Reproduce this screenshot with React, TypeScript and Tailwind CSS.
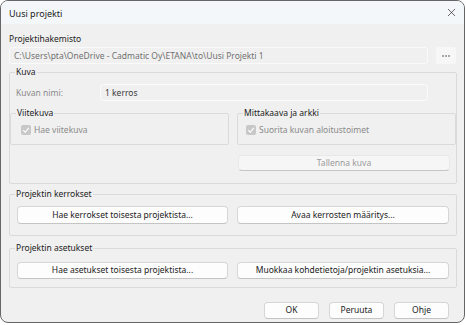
import React from "react";
import { X } from "lucide-react";

const font = { fontFamily: '"Noto Sans", "Liberation Sans", sans-serif' };

function Btn({ label, disabled, className }: { label: string; disabled?: boolean; className?: string }) {
  return (
    <button
      disabled={disabled}
      className={
        "flex h-[18px] items-center justify-center whitespace-nowrap rounded-[4px] border border-b-[#c4c4c4] leading-none " +
        (disabled
          ? "border-[#e8e8e8] bg-[#f6f6f6] text-[#9a9a9a] "
          : "border-[#d6d6d6] bg-[#fdfdfd] text-[#1b1b1b] ") +
        (className ?? "")
      }
    >
      {label}
    </button>
  );
}

function Field({ value, className }: { value: string; className?: string }) {
  return (
    <div
      className={
        "flex h-[17px] items-center whitespace-nowrap rounded-[3px] border border-[#fafafa] bg-[#f0f0f0] px-[4px] " +
        (className ?? "")
      }
    >
      {value}
    </div>
  );
}

function Group({ title, className, children }: { title: string; className?: string; children: React.ReactNode }) {
  return (
    <fieldset className={"rounded-[2px] border border-[#dadada] " + (className ?? "")}>
      <legend className="ml-[5px] px-[1px] leading-[16px] text-[#1b1b1b]">{title}</legend>
      {children}
    </fieldset>
  );
}

function Check({ label }: { label: string }) {
  return (
    <div className="flex items-center gap-[3px] text-[#8a8a8a]">
      <span className="flex h-[10px] w-[10px] items-center justify-center rounded-[2px] bg-[#c8c8c8]">
        <svg width="8" height="8" viewBox="0 0 10 10">
          <path d="M1.5 5.2 L4 7.6 L8.6 2.4" stroke="#ffffff" strokeWidth="1.4" fill="none" />
        </svg>
      </span>
      {label}
    </div>
  );
}

export default function App() {
  return (
    <div className="h-[325px] w-[466px] bg-white text-[8.5px] leading-[16px]" style={font}>
      <div className="flex h-[323px] w-[465px] flex-col overflow-hidden rounded-[8px] border border-[#666666] bg-[#f0f0f0]">
        {/* title bar */}
        <div className="flex h-[23px] shrink-0 items-center justify-between bg-[#f4f7fa] pl-[8px] pr-[6px]">
          <span className="pt-[2px] text-[9px] text-[#1b1b1b]">Uusi projekti</span>
          <X className="h-[13px] w-[13px] text-[#1b1b1b]" strokeWidth={1.2} />
        </div>

        <div className="flex flex-col px-[8px]">
          <div className="mt-[7px] text-[#1b1b1b]">Projektihakemisto</div>
          <div className="flex items-center gap-[8px]">
            <Field value="C:\Users\pta\OneDrive - Cadmatic Oy\ETANA\to\Uusi Projekti 1" className="w-[419px] text-[#707070]" />
            <button disabled className="flex h-[17px] w-[20px] items-center justify-center gap-[1px] rounded-[3px] bg-[#f7f7f7]">
              <span className="h-[2px] w-[2px] bg-[#a8a8a8]" />
              <span className="h-[2px] w-[2px] bg-[#a8a8a8]" />
              <span className="h-[2px] w-[2px] bg-[#a8a8a8]" />
            </button>
          </div>

          <Group title="Kuva" className="w-[448px] pb-[12px]">
            <div className="mt-[4px] flex items-center pl-[6px]">
              <span className="w-[84px] text-[#8a8a8a]">Kuvan nimi:</span>
              <Field value="1 kerros" className="w-[328px] text-[#3a3a3a]" />
            </div>
            <div className="mt-[4px] flex gap-[8px]">
              <Group title="Viitekuva" className="w-[219px] pb-[6px]">
                <div className="mt-[1px] pl-[10px]">
                  <Check label="Hae viitekuva" />
                </div>
              </Group>
              <Group title="Mittakaava ja arkki" className="w-[219px] pb-[6px]">
                <div className="mt-[1px] pl-[8px]">
                  <Check label="Suorita kuvan aloitustoimet" />
                </div>
              </Group>
            </div>
            <div className="mt-[10px] flex justify-end pr-[6px]">
              <Btn label="Tallenna kuva" disabled className="w-[212px] !h-[16px]" />
            </div>
          </Group>

          <Group title="Projektin kerrokset" className="mt-[2px] w-[448px] pb-[11px]">
            <div className="mt-[4px] flex gap-[9px] pl-[7px]">
              <Btn label="Hae kerrokset toisesta projektista..." className="w-[211px]" />
              <Btn label="Avaa kerrosten määritys..." className="w-[212px]" />
            </div>
          </Group>

          <Group title="Projektin asetukset" className="mt-[4px] w-[448px] pb-[8px]">
            <div className="mt-[6px] flex gap-[9px] pl-[7px]">
              <Btn label="Hae asetukset toisesta projektista..." className="w-[211px] !h-[17px]" />
              <Btn label="Muokkaa kohdetietoja/projektin asetuksia..." className="w-[212px] !h-[17px]" />
            </div>
          </Group>

          <div className="mt-[14px] flex justify-end gap-[10px] pr-[7px]">
            <Btn label="OK" className="w-[55px] !h-[17px]" />
            <Btn label="Peruuta" className="w-[55px] !h-[17px]" />
            <Btn label="Ohje" className="w-[55px] !h-[17px]" />
          </div>
        </div>
      </div>
    </div>
  );
}
